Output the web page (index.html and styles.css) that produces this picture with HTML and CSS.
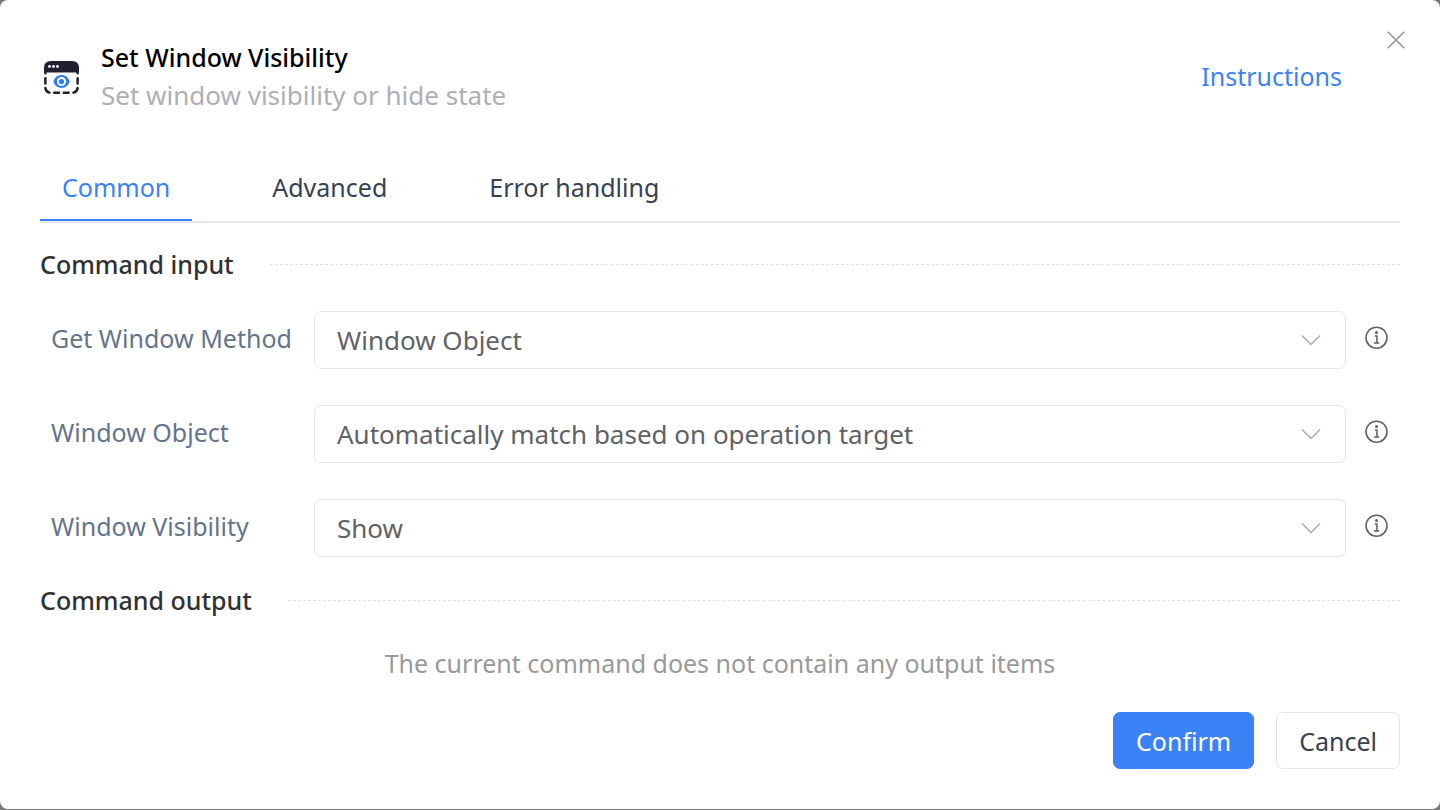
FILE: index.html
```html
<!DOCTYPE html>
<html lang="en">
<head>
<meta charset="utf-8">
<meta name="viewport" content="width=device-width, initial-scale=1">
<title>Set Window Visibility</title>
<link rel="stylesheet" href="styles.css">
</head>
<body>
<svg class="sprite" aria-hidden="true">
  <symbol id="chevron" viewBox="0 0 20 12"><path d="M1 1.5l9 9 9-9" fill="none" stroke="currentColor" stroke-width="1.5"/></symbol>
  <symbol id="info" viewBox="0 0 24 24"><circle cx="11.500" cy="11.700" r="10.500" fill="none" stroke="currentColor" stroke-width="1.600"/><circle cx="11.500" cy="6.500" r="1.500" fill="currentColor"/><path d="M9.800 9.900h2.100v7.200M9 17h5.200" fill="none" stroke="currentColor" stroke-width="1.500"/></symbol>
</svg>
<main class="dialog" role="dialog" aria-labelledby="dialog-title">
  <button class="close" type="button" aria-label="Close">
    <svg viewBox="0 0 18 18"><path d="M.7.7l16.6 16.6M17.3.7L.7 17.3" fill="none" stroke="currentColor" stroke-width="1.500"/></svg>
  </button>
  <header class="header">
    <svg class="logo" viewBox="0 -4 36 38" aria-hidden="true">
      <path d="M0 11.5V7q0-7 7-7h21q7 0 7 7v4.500z" fill="#231f30"/>
      <g fill="#fff"><circle cx="5.500" cy="5.500" r="1.400"/><circle cx="9.500" cy="5.500" r="1.400"/><circle cx="13.500" cy="5.500" r="1.400"/></g>
      <g fill="none" stroke="#231f30" stroke-width="2.500" stroke-linecap="round"><path d="M1.400 11v1.300M33.600 11v1.300M1.400 17.200v5.200M33.600 17.200v5.200M1.400 27q.4 3.800 4.200 4.600M33.600 27q-.4 3.800-4.200 4.600M10.200 31.800h4.800M19.800 31.800h4.800"/></g>
      <path d="M9.500 20.500C11.500 11.900 23.500 11.900 25.500 20.500C23.500 29.100 11.500 29.100 9.500 20.500z" fill="#2b7cf7"/>
      <circle cx="17.500" cy="20.500" r="3.600" fill="#2b7cf7" stroke="#fff" stroke-width="2"/>
    </svg>
    <div class="heading">
      <h1 class="title" id="dialog-title">Set Window Visibility</h1>
      <p class="subtitle">Set window visibility or hide state</p>
    </div>
    <a class="instructions" href="#">Instructions</a>
  </header>
  <div class="tabs" role="tablist">
    <button class="tab tab-active" type="button" role="tab" aria-selected="true">Common</button>
    <button class="tab" type="button" role="tab" aria-selected="false">Advanced</button>
    <button class="tab" type="button" role="tab" aria-selected="false">Error handling</button>
  </div>
  <form class="form">
    <h2 class="section">Command input</h2>
    <div class="fields">
      <div class="field">
        <label class="label" for="method">Get Window Method</label>
        <div class="control"><select class="select" id="method"><option>Window Object</option></select><svg class="chevron" aria-hidden="true"><use href="#chevron"/></svg></div>
        <button class="info" type="button" aria-label="About Get Window Method"><svg><use href="#info"/></svg></button>
      </div>
      <div class="field">
        <label class="label" for="object">Window Object</label>
        <div class="control"><select class="select" id="object"><option>Automatically match based on operation target</option></select><svg class="chevron" aria-hidden="true"><use href="#chevron"/></svg></div>
        <button class="info" type="button" aria-label="About Window Object"><svg><use href="#info"/></svg></button>
      </div>
      <div class="field">
        <label class="label" for="visibility">Window Visibility</label>
        <div class="control"><select class="select" id="visibility"><option>Show</option></select><svg class="chevron" aria-hidden="true"><use href="#chevron"/></svg></div>
        <button class="info" type="button" aria-label="About Window Visibility"><svg><use href="#info"/></svg></button>
      </div>
    </div>
    <h2 class="section">Command output</h2>
    <p class="empty">The current command does not contain any output items</p>
    <div class="actions">
      <button class="button button-primary" type="submit">Confirm</button>
      <button class="button" type="button">Cancel</button>
    </div>
  </form>
</main>
</body>
</html>
```
FILE: styles.css
```css
* {
  box-sizing: border-box;
}

body {
  margin: 0;
  padding-bottom: 1px;
  background: #777;
  font: 25px/38px "Noto Sans", "Open Sans", sans-serif;
}

h1, h2, p {
  margin: 0;
  font-size: inherit;
}

button, select {
  margin: 0;
  padding: 0;
  border: 0;
  background: none;
  color: inherit;
  font: inherit;
  cursor: pointer;
}

.sprite {
  position: absolute;
  width: 0;
  height: 0;
}

.dialog {
  position: relative;
  min-height: calc(100vh - 1px);
  padding: 38px 40px 40px;
  border-radius: 8px;
  background: #fff;
}

.close {
  position: absolute;
  top: 30px;
  right: 34px;
  width: 20px;
  height: 20px;
  padding: 0 1px;
  color: #909399;
}

.close svg {
  display: block;
  width: 18px;
  height: 18px;
}

.header {
  display: flex;
  align-items: center;
  gap: 21px;
  padding: 0 58px 0 4px;
}

.logo {
  flex: none;
  width: 36px;
  height: 38px;
}

.heading {
  flex: 1;
}

.title {
  color: #000;
  font-weight: 500;
}

.subtitle {
  color: #b0aeb5;
  font-size: 26px;
}

.instructions {
  color: #3b82f6;
  text-decoration: none;
}

.tabs {
  display: flex;
  gap: 58px;
  margin-top: 54px;
  border-bottom: 2px solid #e4e7ed;
}

.tab {
  padding: 0 22px 13px;
  border-bottom: 2px solid transparent;
  color: #374151;
}

.tab-active {
  border-color: #3b82f6;
  color: #3b82f6;
}

.section {
  display: flex;
  align-items: center;
  gap: 36px;
  color: #303133;
  font-weight: 500;
}

.section::after {
  flex: 1;
  border-top: 1px dashed #dcdfe6;
  content: "";
}

.form {
  padding-top: 22px;
}

.fields {
  display: grid;
  gap: 36px;
  padding: 28px 11px 24px;
}

.field {
  display: grid;
  grid-template-columns: 263px 1fr 24px;
  align-items: center;
}

.label {
  padding-bottom: 4px;
  color: #64748b;
}

.control {
  display: grid;
  align-items: center;
  margin-right: 19px;
}

.select {
  grid-area: 1 / 1;
  width: 100%;
  height: 58px;
  padding: 0 60px 1px 22px;
  border: 1px solid #e5e6e8;
  border-radius: 7px;
  background: #fff;
  color: #606266;
  font-size: 26px;
  appearance: none;
}

.chevron {
  grid-area: 1 / 1;
  justify-self: end;
  width: 20px;
  height: 12px;
  margin-right: 25px;
  color: #a8abb2;
  pointer-events: none;
}

.info {
  height: 24px;
  margin-bottom: 4px;
  color: #606266;
}

.info svg {
  display: block;
  width: 24px;
  height: 24px;
}

.empty {
  margin-top: 25px;
  color: #999;
  text-align: center;
}

.actions {
  display: flex;
  justify-content: flex-end;
  gap: 22px;
  margin-top: 30px;
}

.button {
  height: 57px;
  padding: 0 22px;
  border: 1px solid #e5e6e8;
  border-radius: 7px;
  background: #fff;
  color: #374151;
}

.button-primary {
  border-color: #3b82f6;
  background: #3b82f6;
  color: #fff;
}
```
